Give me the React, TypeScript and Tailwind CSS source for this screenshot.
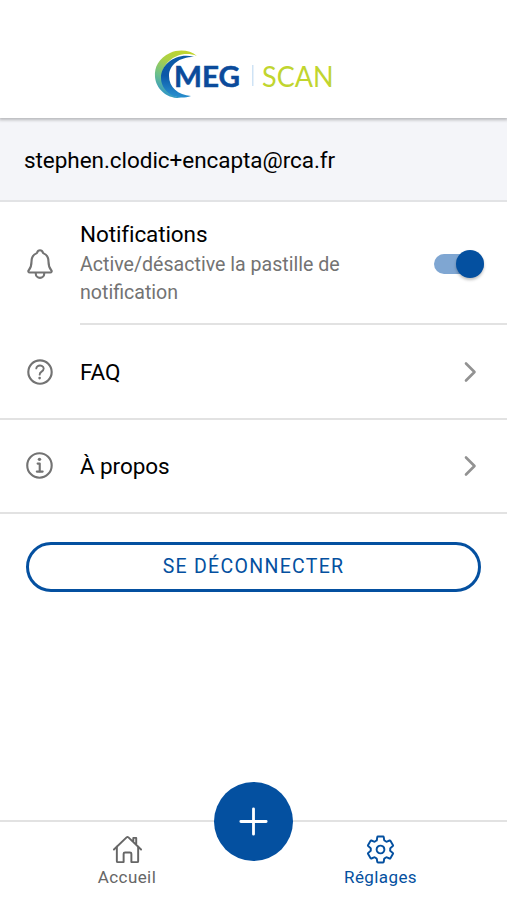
import { useState } from "react";
import type { ReactNode } from "react";
import {
  IoAdd,
  IoHelpCircleOutline,
  IoHomeOutline,
  IoInformationCircleOutline,
  IoNotificationsOutline,
  IoSettingsOutline,
} from "react-icons/io5";

type LinkRowProps = {
  icon: ReactNode;
  label: string;
};

function Logo() {
  return (
    <svg width="200" height="50" viewBox="0 0 200 50" className="mt-[49px] ml-[154px]">
      <defs>
        <linearGradient id="green" x1="0.7" y1="0" x2="0.3" y2="1">
          <stop offset="0" stopColor="#c0d52d" />
          <stop offset="0.3" stopColor="#acd145" />
          <stop offset="0.65" stopColor="#6cc08c" />
          <stop offset="1" stopColor="#2a93cc" />
        </linearGradient>
        <linearGradient id="blue" x1="0.5" y1="0" x2="0.4" y2="1">
          <stop offset="0" stopColor="#0d5ba6" />
          <stop offset="0.5" stopColor="#0a58a8" />
          <stop offset="1" stopColor="#2a92d0" />
        </linearGradient>
      </defs>
      <path d="M43 7C36 1 25 0 16 4C5 9 0 18 1 28C2 40 13 50 27 49C15 46 8 38 8 28C8 13 25 0 43 7Z" fill="url(#green)" />
      <path d="M40 8C24 3 7 14 7 29C7 41 20 53 37 47C24 46 15 38 15 27C15 16 25 8 40 8Z" fill="url(#blue)" />
      <text x="20" y="37.500" fontSize="28" fontWeight="700" textLength="66" lengthAdjust="spacingAndGlyphs" fill="#0b4b9b" stroke="#0b4b9b" strokeWidth="0.500" fontFamily="Lato, sans-serif">
        MEG
      </text>
      <rect x="98" y="16" width="1.500" height="21" fill="#cfe3f5" />
      <text x="108" y="37.500" fontSize="28" textLength="71.500" lengthAdjust="spacingAndGlyphs" fill="#c1d52f" fontFamily="Lato, sans-serif">
        SCAN
      </text>
    </svg>
  );
}

function LinkRow({ icon, label }: LinkRowProps) {
  return (
    <button className="flex h-[94px] w-full shrink-0 items-center border-b-2 border-[#e2e2e2] pl-[23px] text-left">
      <span className="w-[57px] text-[34px] text-[#737373]">{icon}</span>
      <span className="flex-1 pt-0.5 text-[22.500px] tracking-[-0.1px] text-black">{label}</span>
      <svg width="14" height="22" viewBox="0 0 14 22" fill="none" stroke="#929292" strokeWidth="2.600" className="mr-[29px]">
        <path d="M2 2.500 10.500 11 2 19.500" strokeLinecap="round" strokeLinejoin="round" />
      </svg>
    </button>
  );
}

export default function App() {
  const [enabled, setEnabled] = useState(true);

  return (
    <main className="flex h-[900px] w-full flex-col bg-white font-[Roboto,sans-serif]">
      <header className="z-10 h-[118px] shrink-0 bg-white shadow-[0_1px_3px_1px_rgba(0,0,0,0.25)]">
        <Logo />
      </header>

      <section className="flex h-[84px] shrink-0 items-center border-b-2 border-[#e2e3e5] bg-[#f4f5f9] pt-1 pl-6 text-[22.500px] tracking-[-0.05px] text-black">
        stephen.clodic+encapta@rca.fr
      </section>

      <div className="flex h-[123px] shrink-0 pl-[23px]">
        <div className="flex w-[57px] items-center pt-px text-[34px] text-[#737373]">
          <IoNotificationsOutline />
        </div>
        <div className="flex flex-1 items-center border-b-2 border-[#e2e2e2]">
          <div className="w-[300px]">
            <h2 className="text-[22.500px] leading-[30px] tracking-[-0.1px] text-black">Notifications</h2>
            <p className="pt-0.5 text-[19.600px] leading-7 text-[#737373]">Active/désactive la pastille de notification</p>
          </div>
          <button
            role="switch"
            aria-checked={enabled}
            aria-label="Notifications"
            onClick={() => setEnabled(!enabled)}
            className={`mt-0.5 ml-[54px] flex h-5 w-[50px] items-center rounded-full ${
              enabled ? "justify-end bg-[#7fa6d2]" : "justify-start bg-gray-300"
            }`}
          >
            <span className="size-7 rounded-full bg-[#0450a0] shadow-[0_2px_3px_rgba(0,0,0,0.25)]" />
          </button>
        </div>
      </div>

      <div className="pt-px">
        <LinkRow icon={<IoHelpCircleOutline />} label="FAQ" />
        <LinkRow icon={<IoInformationCircleOutline />} label="À propos" />
      </div>

      <button className="mx-[26px] mt-7 h-[50px] shrink-0 rounded-full border-[3px] border-[#0450a0] pb-px text-[19.500px] tracking-[1.300px] text-[#0450a0]">
        SE DÉCONNECTER
      </button>

      <nav className="relative mt-auto flex h-20 shrink-0 border-t-2 border-[#e2e2e2]">
        <a className="flex w-[254px] flex-col items-center pt-3 text-[#666]">
          <IoHomeOutline className="size-[31px]" />
          <span className="text-[17px] leading-6 tracking-[0.400px]">Accueil</span>
        </a>
        <a className="flex w-[253px] flex-col items-center pt-3 text-[#0450a0]">
          <IoSettingsOutline className="size-[31px]" />
          <span className="text-[17px] leading-6 tracking-[0.400px]">Réglages</span>
        </a>
        <button className="absolute -top-10 left-[214px] flex size-[79px] items-center justify-center rounded-full bg-[#0450a0] text-white">
          <IoAdd className="size-[45px]" />
        </button>
      </nav>
    </main>
  );
}
